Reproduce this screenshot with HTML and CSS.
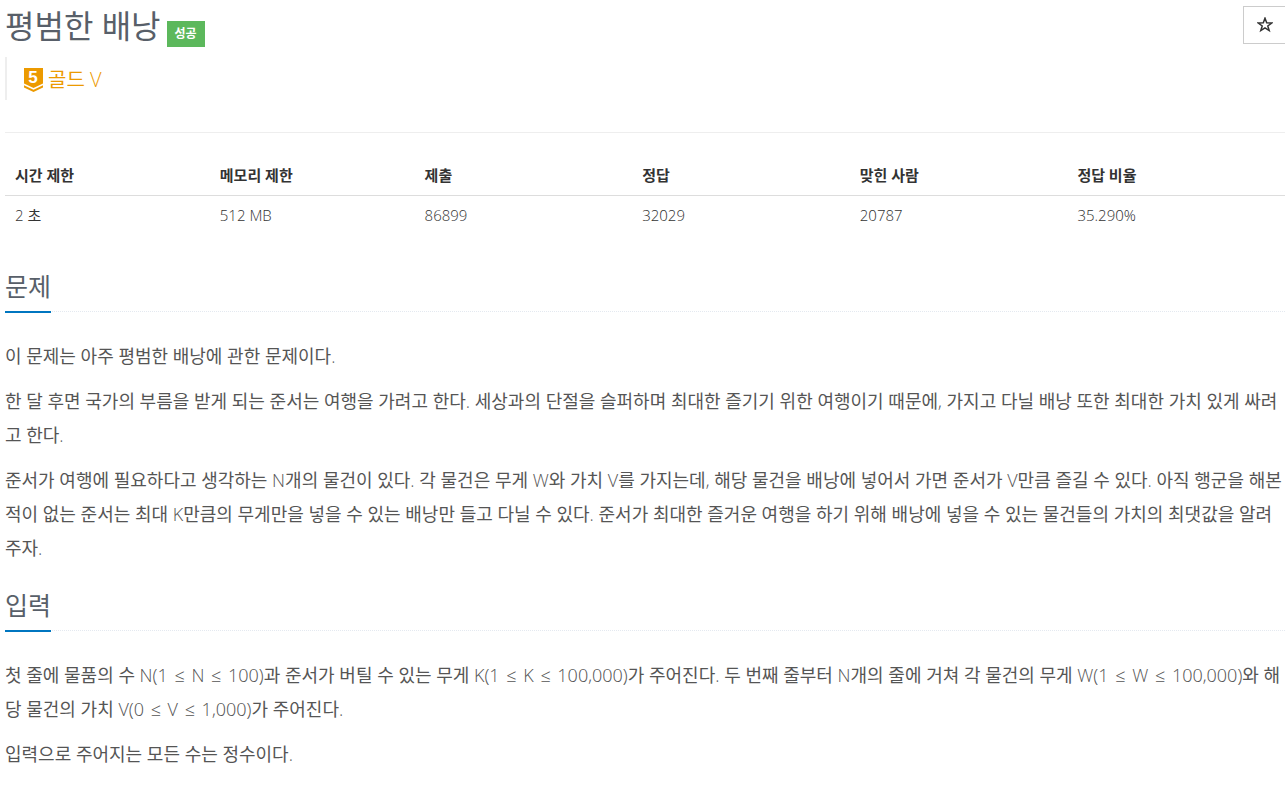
FILE: index.html
```html
<!DOCTYPE html>
<html lang="ko">
<head>
  <meta charset="UTF-8">
  <meta name="viewport" content="width=device-width, initial-scale=1.0">
  <title>평범한 배낭</title>
  <link rel="stylesheet" href="styles.css">
</head>
<body>
  <header class="page-header">
    <div class="title-row">
      <h1>평범한 배낭</h1>
      <span class="label-success">성공</span>
      <button class="btn-star" type="button" aria-label="즐겨찾기">
        <svg width="16" height="16" viewBox="0 0 16 16">
          <path d="M8 1.2 L9.7 5.8 L14.8 6 L10.8 9 L12.2 13.6 L8 10.9 L3.8 13.6 L5.2 9 L1.2 6 L6.3 5.8 Z" fill="none" stroke="#333" stroke-width="1.5"/>
        </svg>
      </button>
    </div>
    <blockquote class="tier">
      <svg class="tier-icon" width="19" height="24" viewBox="0 0 19 24">
        <path d="M0 0 H19 V15.5 L9.5 20 L0 15.5 Z" fill="#ec9a00"/>
        <path d="M0 17.3 L9.5 21.8 L19 17.3 V19.5 L9.5 24 L0 19.5 Z" fill="#ec9a00"/>
        <text x="9" y="15" text-anchor="middle">5</text>
      </svg>
      <span>골드 V</span>
    </blockquote>
  </header>

  <table class="problem-info">
    <thead>
      <tr>
        <th class="narrow">시간 제한</th>
        <th class="narrow">메모리 제한</th>
        <th>제출</th>
        <th>정답</th>
        <th>맞힌 사람</th>
        <th>정답 비율</th>
      </tr>
    </thead>
    <tbody>
      <tr>
        <td>2 초</td>
        <td>512 MB</td>
        <td>86899</td>
        <td>32029</td>
        <td>20787</td>
        <td>35.290%</td>
      </tr>
    </tbody>
  </table>

  <section>
    <div class="headline"><h2>문제</h2></div>
    <div class="problem-text">
      <p>이 문제는 아주 평범한 배낭에 관한 문제이다.</p>
      <p>한 달 후면 국가의 부름을 받게 되는 준서는 여행을 가려고 한다. 세상과의 단절을 슬퍼하며 최대한 즐기기 위한 여행이기 때문에, 가지고 다닐 배낭 또한 최대한 가치 있게 싸려고 한다.</p>
      <p>준서가 여행에 필요하다고 생각하는 N개의 물건이 있다. 각 물건은 무게 W와 가치 V를 가지는데, 해당 물건을 배낭에 넣어서 가면 준서가 V만큼 즐길 수 있다. 아직 행군을 해본 적이 없는 준서는 최대 K만큼의 무게만을 넣을 수 있는 배낭만 들고 다닐 수 있다. 준서가 최대한 즐거운 여행을 하기 위해 배낭에 넣을 수 있는 물건들의 가치의 최댓값을 알려주자.</p>
    </div>
  </section>

  <section>
    <div class="headline"><h2>입력</h2></div>
    <div class="problem-text">
      <p>첫 줄에 물품의 수 N(1 <span class="op">≤</span> N <span class="op">≤</span> 100)과 준서가 버틸 수 있는 무게 K(1 <span class="op">≤</span> K <span class="op">≤</span> 100,000)가 주어진다. 두 번째 줄부터 N개의 줄에 거쳐 각 물건의 무게 W(1 <span class="op">≤</span> W <span class="op">≤</span> 100,000)와 해당 물건의 가치 V(0 <span class="op">≤</span> V <span class="op">≤</span> 1,000)가 주어진다.</p>
      <p>입력으로 주어지는 모든 수는 정수이다.</p>
    </div>
  </section>
</body>
</html>
```
FILE: styles.css
```css
body {
  margin: 0;
  padding: 6px 0 0 5px;
  background-color: #fff;
  color: #333;
  font-family: "Open Sans Light", "Open Sans", "Noto Sans CJK KR", sans-serif;
  font-size: 15px;
  line-height: 20px;
}
h1,
h2 {
  margin: 0;
  color: #585f69;
  font-weight: 400;
}
h1 {
  font-size: 32px;
  line-height: 40px;
}
.page-header {
  padding-bottom: 32px;
  border-bottom: 1px solid #eee;
}
.title-row {
  display: flex;
  align-items: flex-start;
}
.label-success {
  margin: 15px 0 0 6px;
  padding: 3px 8px;
  background-color: #5cb85c;
  color: #fff;
  font-size: 12px;
  font-weight: 700;
}
.btn-star {
  display: flex;
  align-items: center;
  justify-content: center;
  width: 42px;
  height: 38px;
  margin-left: auto;
  padding: 0;
  background-color: #fff;
  border: 1px solid #ccc;
  border-right: none;
  cursor: pointer;
}
.btn-star:hover {
  background-color: #eee;
}
.tier {
  display: flex;
  align-items: center;
  box-sizing: border-box;
  height: 43px;
  margin: 10px 0 0;
  padding: 2px 0 0 17px;
  border-left: 2px solid #eee;
  color: #ec9a00;
  font-size: 20px;
}
.tier-icon {
  margin-right: 5px;
  overflow: visible;
}
.tier-icon text {
  fill: #fff;
  font-family: "Liberation Sans", sans-serif;
  font-size: 17px;
  font-weight: 700;
}
.problem-info {
  width: 100%;
  margin: 22px 0 33px;
  border-collapse: collapse;
  table-layout: fixed;
}
.problem-info th,
.problem-info td {
  padding: 10px;
  text-align: left;
}
.problem-info td {
  padding: 9px 10px 11px;
}
.problem-info th {
  border-bottom: 1px solid #ddd;
  font-weight: 700;
}
.problem-info .narrow {
  width: 16%;
  box-sizing: border-box;
}
.headline {
  margin: 23px 0 27px;
  border-bottom: 1px dotted #e4e9f0;
}
.headline h2 {
  display: inline-block;
  margin-bottom: -2px;
  padding-bottom: 8px;
  border-bottom: 2px solid #0076c0;
  font-size: 25px;
  line-height: 34px;
}
.problem-text {
  color: #555;
  font-size: 18px;
  line-height: 34px;
}
.problem-text p {
  margin: 0 0 11px;
}
.op {
  padding: 0 2px;
}
```
